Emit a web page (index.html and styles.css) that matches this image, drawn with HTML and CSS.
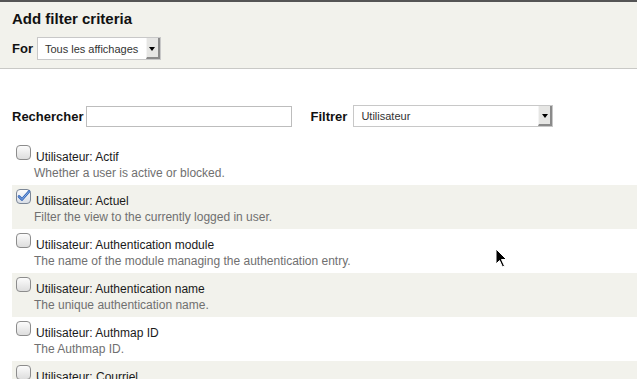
FILE: index.html
```html
<!DOCTYPE html>
<html lang="fr">
<head>
    <meta charset="UTF-8">
    <meta name="viewport" content="width=device-width, initial-scale=1.0">
    <title>Add filter criteria</title>
    <link rel="stylesheet" href="styles.css">
</head>
<body>
    <header class="filter-head">
        <h2>Add filter criteria</h2>
        <div class="for-row">
            <label class="field-label">For</label>
            <div class="select select-for">
                <span class="select-value">Tous les affichages</span>
                <span class="select-btn"><span class="arrow"></span></span>
            </div>
        </div>
    </header>

    <main class="filter-body">
        <div class="search-row">
            <label class="field-label" for="search">Rechercher</label>
            <input type="text" id="search" class="search-input">
            <label class="field-label filter-label">Filtrer</label>
            <div class="select select-filter">
                <span class="select-value">Utilisateur</span>
                <span class="select-btn"><span class="arrow"></span></span>
            </div>
        </div>

        <ul class="criteria">
            <li class="criterion">
                <div class="criterion-line">
                    <svg class="check" width="15" height="15" viewBox="0 0 15 15"><defs><linearGradient id="cb1" x1="0" y1="0" x2="0" y2="1"><stop offset="0" stop-color="#fdfdfd"/><stop offset="1" stop-color="#dcdcdc"/></linearGradient></defs><rect x="0.5" y="0.5" width="14" height="14" rx="3.5" fill="url(#cb1)" stroke="#8c8c8c"/></svg>
                    <span class="criterion-label">Utilisateur: Actif</span>
                </div>
                <div class="criterion-desc">Whether a user is active or blocked.</div>
            </li>
            <li class="criterion">
                <div class="criterion-line">
                    <svg class="check" width="15" height="15" viewBox="0 0 15 15"><defs><linearGradient id="cb2" x1="0" y1="0" x2="0" y2="1"><stop offset="0" stop-color="#fdfdfd"/><stop offset="1" stop-color="#d8dde6"/></linearGradient></defs><rect x="0.5" y="0.5" width="14" height="14" rx="3.5" fill="url(#cb2)" stroke="#7c8796"/><path d="M3 7.5 L6 10.5 L13 2.5" fill="none" stroke="#2f63b8" stroke-width="2.6" stroke-linecap="round" stroke-linejoin="round"/><path d="M3 7.5 L6 10.5 L13 2.5" fill="none" stroke="#8fb2e8" stroke-width="1" stroke-linecap="round" stroke-linejoin="round"/></svg>
                    <span class="criterion-label">Utilisateur: Actuel</span>
                </div>
                <div class="criterion-desc">Filter the view to the currently logged in user.</div>
            </li>
            <li class="criterion">
                <div class="criterion-line">
                    <svg class="check" width="15" height="15" viewBox="0 0 15 15"><rect x="0.5" y="0.5" width="14" height="14" rx="3.5" fill="url(#cb1)" stroke="#8c8c8c"/></svg>
                    <span class="criterion-label">Utilisateur: Authentication module</span>
                </div>
                <div class="criterion-desc">The name of the module managing the authentication entry.</div>
            </li>
            <li class="criterion">
                <div class="criterion-line">
                    <svg class="check" width="15" height="15" viewBox="0 0 15 15"><rect x="0.5" y="0.5" width="14" height="14" rx="3.5" fill="url(#cb1)" stroke="#8c8c8c"/></svg>
                    <span class="criterion-label">Utilisateur: Authentication name</span>
                </div>
                <div class="criterion-desc">The unique authentication name.</div>
            </li>
            <li class="criterion">
                <div class="criterion-line">
                    <svg class="check" width="15" height="15" viewBox="0 0 15 15"><rect x="0.5" y="0.5" width="14" height="14" rx="3.5" fill="url(#cb1)" stroke="#8c8c8c"/></svg>
                    <span class="criterion-label">Utilisateur: Authmap ID</span>
                </div>
                <div class="criterion-desc">The Authmap ID.</div>
            </li>
            <li class="criterion">
                <div class="criterion-line">
                    <svg class="check" width="15" height="15" viewBox="0 0 15 15"><rect x="0.5" y="0.5" width="14" height="14" rx="3.5" fill="url(#cb1)" stroke="#8c8c8c"/></svg>
                    <span class="criterion-label">Utilisateur: Courriel</span>
                </div>
                <div class="criterion-desc">The email address of the user.</div>
            </li>
        </ul>
    </main>

    <!-- mouse pointer seen in the screenshot -->
    <svg class="cursor" width="13" height="21" viewBox="0 0 13 21"><path d="M1 1 L1 16 L4.5 12.5 L7.5 19 L9.5 18 L6.5 11.5 L11.5 11.5 Z" fill="#000" stroke="#fff" stroke-width="1" stroke-linejoin="round"/></svg>
</body>
</html>
```

FILE: styles.css
```css
html, body {
    margin: 0;
    padding: 0;
    height: 100%;
    overflow: hidden;
}
body {
    font-family: "Liberation Sans", Arial, sans-serif;
    background-color: #fff;
    color: #222;
    position: relative;
}
.filter-head {
    background-color: #f2f2ec;
    border-top: 2px solid #555;
    border-bottom: 1px solid #c9c9c6;
    padding: 7px 12px 8px;
}
.filter-head h2 {
    margin: 0;
    font-size: 15px;
    line-height: 20px;
    font-weight: bold;
    color: #111;
}
.for-row {
    display: flex;
    align-items: center;
    gap: 4px;
    margin-top: 8px;
}
.field-label {
    font-size: 13px;
    font-weight: bold;
    color: #111;
}
.select {
    display: flex;
    background-color: #fff;
    border: 1px solid #c8c8c8;
    box-sizing: border-box;
}
.select-value {
    flex: 1;
    padding-left: 7px;
    font-size: 11px;
    color: #333;
    display: flex;
    align-items: center;
}
.select-btn {
    width: 11px;
    display: flex;
    align-items: center;
    justify-content: center;
    background-color: #e6e6e4;
    border-left: 1px solid #f4f4f4;
    border-right: 2px solid #8a8a8a;
    border-bottom: 2px solid #8a8a8a;
}
.arrow {
    width: 0;
    height: 0;
    border-left: 3px solid transparent;
    border-right: 3px solid transparent;
    border-top: 4px solid #000;
    margin-top: 2px;
}
.select-for {
    width: 124px;
    height: 23px;
}
.filter-body {
    padding: 36px 0 0 12px;
}
.search-row {
    display: flex;
    align-items: center;
    height: 22px;
}
.search-input {
    width: 206px;
    height: 21px;
    box-sizing: border-box;
    margin: 0 0 0 2px;
    border: 1px solid #bdbdbd;
    padding: 2px 4px;
}
.filter-label {
    margin: 0 6px 0 19px;
}
.select-filter {
    width: 200px;
    height: 22px;
}
.criteria {
    list-style: none;
    margin: 14px 0 0 0;
    padding: 0;
}
.criterion {
    padding: 8px 0 4px 4px;
    font-size: 12px;
    line-height: 16px;
}
.criterion:nth-child(even) {
    background-color: #f2f2ec;
}
.criterion-line {
    display: flex;
    align-items: flex-start;
}
.check {
    margin: -4px 5px 0 0;
    flex-shrink: 0;
}
.criterion-label {
    color: #1a1a1a;
}
.criterion-desc {
    margin-left: 18px;
    color: #707070;
}
.cursor {
    position: absolute;
    left: 495px;
    top: 248px;
}
```
